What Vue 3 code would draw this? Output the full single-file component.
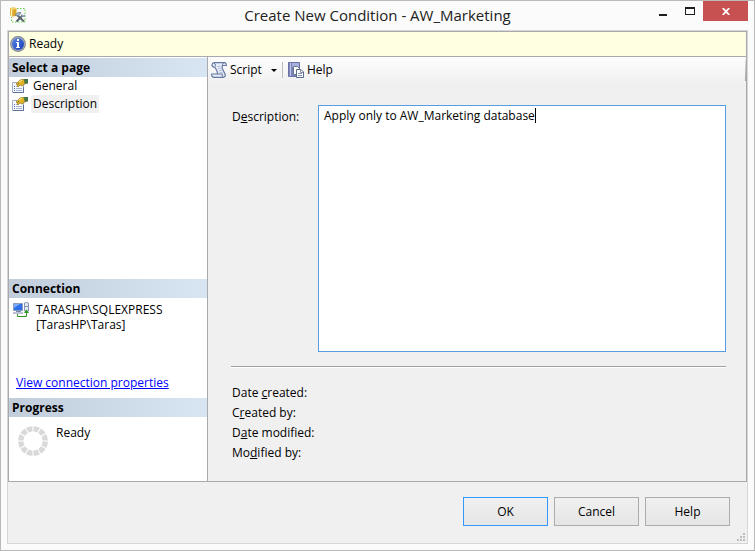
<script setup>
import { ref, onMounted } from 'vue'

const pages = ['General', 'Description']
const current = ref('Description')
const description = ref('Apply only to AW_Marketing database')
const details = [
  { before: 'Date ', key: 'c', after: 'reated:' },
  { before: 'C', key: 'r', after: 'eated by:' },
  { before: 'D', key: 'a', after: 'te modified:' },
  { before: 'Mo', key: 'd', after: 'ified by:' },
]
const segments = Array.from({ length: 12 }, (_, i) => i * 30 + 15)
const box = ref(null)
const caretLeft = ref(0)
const idle = ref(true)

// Steady caret after the last character until the user starts editing.
onMounted(() => {
  const style = getComputedStyle(box.value)
  const pen = document.createElement('canvas').getContext('2d')
  pen.font = `${style.fontSize} ${style.fontFamily}`
  caretLeft.value = Math.round(pen.measureText(description.value).width) + 6
})
</script>

<template>
  <div class="window">
    <header class="titlebar">
      <svg class="app-icon" width="16" height="16" viewBox="0 0 16 16" aria-hidden="true">
        <path d="M7 1.500H15V15H1.500V10" fill="none" stroke="#62cf42" stroke-width="1" stroke-dasharray="1.500 1.500" />
        <path d="M0 1.500Q3 -.5 6.500 1.500V8.500Q3 10.500 0 8.500Z" fill="#d9a72c" />
        <path d="M1.500 2V9" stroke="#fff2a8" stroke-width="1.500" />
        <ellipse cx="3.300" cy="1.600" rx="3" ry="1.100" fill="#f4d46b" />
        <path d="M6.500 14.500L12.500 8.500" stroke="#4e5b6b" stroke-width="1.800" />
        <path d="M7 8L14 14.500" stroke="#5c6470" stroke-width="1.800" />
        <path d="M5 8L8 5.500H11L8.500 9Z" fill="#aab9cc" stroke="#66778c" stroke-width=".7" />
        <path d="M11.500 6.500L13 8.500L15.500 7.500L14.500 10L11.500 10Z" fill="#8295ad" />
      </svg>
      <h1>Create New Condition - AW_Marketing</h1>
      <div class="window-buttons">
        <button class="minimize" type="button" aria-label="Minimize">
          <svg width="8" height="10"><path d="M0 9H8" stroke="#1e1e1e" stroke-width="2" /></svg>
        </button>
        <button class="maximize" type="button" aria-label="Maximize">
          <svg width="10" height="8"><path d="M0 1H10M.5 1V8M9.500 1V8M0 7.500H10" fill="none" stroke="#1e1e1e" /><path d="M0 1H10" stroke="#1e1e1e" stroke-width="2" /></svg>
        </button>
        <button class="close" type="button" aria-label="Close">
          <svg width="8" height="7" viewBox="0 0 8 7"><path d="M.7 0L7.300 7M7.300 0L.7 7" stroke="#fff" stroke-width="1.800" /></svg>
        </button>
      </div>
    </header>

    <div class="client">
      <div class="frame">
        <div class="status">
          <svg width="16" height="16" viewBox="0 0 16 16" aria-hidden="true">
            <defs>
              <linearGradient id="info" x1="0" y1="0" x2="1" y2="1">
                <stop offset="0" stop-color="#5c86ea" />
                <stop offset="1" stop-color="#123cae" />
              </linearGradient>
            </defs>
            <circle cx="8" cy="8" r="7.900" fill="#7d808d" />
            <circle cx="8" cy="8" r="7" fill="#a9adba" />
            <circle cx="8" cy="8" r="6" fill="url(#info)" />
            <path d="M7 3h2v2H7zM6 6h3v5h1v1H6v-1h1V7H6z" fill="#fff" />
          </svg>
          <span>Ready</span>
        </div>

        <div class="main">
          <aside class="sidebar">
            <h2>Select a page</h2>
            <nav class="pages">
              <button v-for="p in pages" :key="p" class="page" type="button" :class="{ active: p === current }" @click="current = p">
                <svg width="16" height="14" viewBox="0 0 16 14" aria-hidden="true">
                  <path d="M.5 3.500H11.500V13.500H.5Z" fill="#f8faff" stroke="#a3afc8" />
                  <path d="M1 13.500H11.500V8" fill="none" stroke="#5f7096" />
                  <path d="M2 7.500H3M2 9.500H3M2 11.500H3" stroke="#4b6fc2" />
                  <path d="M4 7.500H6M4 9.500H10M4 11.500H10" stroke="#a9b5ce" />
                  <path d="M4 5L8 1L11 0L13 2V5L10 7L8 6L6 8L5 7L7 4L5 6Z" fill="#e0b228" stroke="#8d701f" stroke-width=".6" />
                  <path d="M7 3L10 1" stroke="#ffed88" />
                  <path d="M11.500 0H16V4.500L13 5Z" fill="#477646" />
                </svg>
                <span>{{ p }}</span>
              </button>
            </nav>

            <h2>Connection</h2>
            <section class="connection">
              <div class="server">
                <svg width="16" height="16" viewBox="0 0 16 16" aria-hidden="true">
                  <path d="M.5 1.500H9.500V8.500H.5Z" fill="#2f6eea" stroke="#8b9cb9" />
                  <path d="M1 2H7L1 6Z" fill="#78acff" />
                  <path d="M3 9.500H8M0 11H10" stroke="#7885a3" />
                  <path d="M11.500 1Q13.500 0 15.500 1V9H11.500Z" fill="#e4e8f1" stroke="#8795b0" />
                  <path d="M12 4.500H15" stroke="#8795b0" />
                  <path d="M4.500 12V14.500H13.500V9" fill="none" stroke="#2f9820" />
                  <path d="M11 11L13.500 7.500L16 11Z" fill="#2f9820" />
                </svg>
                <p>TARASHP\SQLEXPRESS<br>[TarasHP\Taras]</p>
              </div>
              <a href="#connection">View connection properties</a>
            </section>

            <h2>Progress</h2>
            <section class="progress">
              <svg width="30" height="30" viewBox="-15 -15 30 30" aria-hidden="true">
                <path v-for="a in segments" :key="a" d="M-3.300 -14.500Q0 -15.300 3.300 -14.500L2 -9.300Q0 -9.800 -2 -9.300Z" fill="#d9d9d9" :transform="`rotate(${a})`" />
              </svg>
              <span>Ready</span>
            </section>
          </aside>

          <main class="content">
            <div class="toolbar">
              <button class="tool script" type="button">
                <svg width="16" height="16" viewBox="0 0 16 16" aria-hidden="true">
                  <path d="M3 .7H13.500Q15.500 .8 15.300 3.500H11.500Q10.500 5 12 8L14 12Q15 15 12 15.300H2.500Q.3 15 .7 12H6Q7 11 5.500 8L4 5.500Q1 5 1 3Q1 1 3 .7Z" fill="#e7ecf8" stroke="#65789f" stroke-width="1.200" />
                  <path d="M3 1Q5 1.500 4.300 4.500M12.500 1Q11 2 11.500 4M6 12H11.500Q10.500 14 12 15" fill="none" stroke="#65789f" />
                  <path d="M6 4.500H9.500M7 6.500H10M8 8.500H11M8.500 10.500H11.500" stroke="#b3c1dd" />
                </svg>
                <span>Script</span>
                <svg class="arrow" width="6" height="3" aria-hidden="true"><path d="M0 0H6L3 3Z" fill="#000" /></svg>
              </button>
              <span class="divider"></span>
              <button class="tool" type="button">
                <svg width="16" height="16" viewBox="0 0 16 16" aria-hidden="true">
                  <path d="M.5 .5H11.500V14.500H.5Z" fill="#7b83bd" stroke="#6a72a8" />
                  <path d="M2.500 1V14" stroke="#c3c7e6" />
                  <path d="M4 1H11V5H4Z" fill="#a8b0dc" />
                  <path d="M5.500 4.500H9.500L11.500 6.500V12.500H5.500Z" fill="#fff" stroke="#697994" />
                  <path d="M8.500 7.500H13L15.500 10V15.500H8.500Z" fill="#fff" stroke="#596b88" />
                  <path d="M12.500 7.500V10.500H15M10 11.500H14M10 13.500H14" fill="none" stroke="#8292ae" />
                </svg>
                <span>Help</span>
              </button>
            </div>

            <div class="form">
              <div class="field">
                <label for="description">D<u>e</u>scription:</label>
                <div class="editor">
                  <textarea id="description" ref="box" v-model="description" spellcheck="false" @focus="idle = false"></textarea>
                  <span v-if="idle" class="caret" :style="{ left: caretLeft + 'px' }"></span>
                </div>
              </div>
              <hr>
              <div class="details">
                <p v-for="d in details" :key="d.after">{{ d.before }}<u>{{ d.key }}</u>{{ d.after }}</p>
              </div>
            </div>
          </main>
        </div>
      </div>

      <footer class="actions">
        <button class="action default" type="button">OK</button>
        <button class="action" type="button">Cancel</button>
        <button class="action" type="button">Help</button>
        <svg class="grip" width="8" height="8" aria-hidden="true">
          <path d="M6 0h2v2H6zM3 3h2v2H3zM6 3h2v2H6zM0 6h2v2H0zM3 6h2v2H3zM6 6h2v2H6z" fill="#bdbdbd" />
        </svg>
      </footer>
    </div>
  </div>
</template>

<style>
body {
  margin: 0;
}
</style>

<style scoped>
* {
  box-sizing: border-box;
}

.window {
  display: flex;
  flex-direction: column;
  min-height: 100vh;
  padding: 0 6px 6px;
  border: 1px solid #b9b9b9;
  background: #fbfbfb;
  color: #000;
  font: 12px/16px "Segoe UI", "Open Sans", "Noto Sans", sans-serif;
}

button {
  padding: 0;
  border: 0;
  background: none;
  color: inherit;
  font: inherit;
}

svg {
  display: block;
  flex: none;
}

h1,
h2,
p {
  margin: 0;
}

.titlebar {
  display: grid;
  grid-template-columns: 1fr auto 1fr;
  height: 29px;
}

.app-icon {
  margin: 6px 0 0 3px;
}

h1 {
  color: #222;
  font-size: 15px;
  font-weight: 400;
  line-height: 29px;
}

.window-buttons {
  display: flex;
  justify-content: flex-end;
}

.window-buttons button {
  display: flex;
  align-items: center;
  justify-content: center;
  width: 27px;
  height: 20px;
}

.window-buttons .close {
  width: 45px;
  background: #c75050;
}

.client {
  display: flex;
  flex: 1;
  flex-direction: column;
  border: 1px solid #d6d6d6;
  background: #f0f0f0;
}

.frame {
  display: flex;
  flex: 1;
  flex-direction: column;
  border: 1px solid #a9a9ad;
}

.status {
  display: flex;
  align-items: center;
  gap: 3px;
  height: 25px;
  padding-left: 1px;
  border-bottom: 1px solid #a9a9ad;
  background: #ffffe1;
}

.main {
  display: flex;
  flex: 1;
}

.sidebar {
  display: flex;
  flex: none;
  flex-direction: column;
  width: 199px;
  padding-top: 1px;
  border-right: 1px solid #a9a9ad;
  background: #fff;
}

h2 {
  padding-left: 3px;
  background: linear-gradient(90deg, #c1cddb, #d8e5f3);
  font-size: 12px;
  font-weight: 700;
  line-height: 19px;
}

.pages {
  flex: 1;
}

.page {
  display: flex;
  align-items: center;
  gap: 3px;
  height: 18px;
  padding-left: 3px;
}

.page span {
  padding: 0 2px;
  line-height: 18px;
}

.page.active span {
  background: #f0f0f0;
}

.connection {
  display: flex;
  flex-direction: column;
  align-items: flex-start;
  justify-content: space-between;
  height: 100px;
  padding: 4px 7px 7px 4px;
}

.server {
  display: flex;
  gap: 7px;
  line-height: 15px;
}

.connection a {
  margin-left: 3px;
  color: #00f;
}

.progress {
  display: flex;
  gap: 8px;
  height: 64px;
  padding: 8px 9px;
}

.progress svg {
  margin-top: 1px;
}

.content {
  display: flex;
  flex: 1;
  flex-direction: column;
  min-width: 0;
}

.toolbar {
  display: flex;
  align-items: center;
  height: 26px;
  padding-left: 3px;
  background:
    linear-gradient(#e4e4e4, #a0a0a0) right 3px / 1px 21px no-repeat,
    linear-gradient(#fdfdfd, #f0f0f0);
}

.tool {
  display: flex;
  align-items: center;
  gap: 3px;
}

.arrow {
  margin-left: 6px;
}

.divider {
  width: 1px;
  height: 16px;
  margin: 0 5px;
  background: #bdbdbd;
}

.form {
  display: flex;
  flex: 1;
  flex-direction: column;
  padding: 22px 20px 18px 23px;
}

.field {
  display: flex;
  flex: 1;
}

.field label {
  width: 87px;
  padding: 4px 0 0 1px;
}

.editor {
  position: relative;
  display: flex;
  flex: 1;
  min-width: 0;
}

textarea {
  flex: 1;
  min-width: 0;
  padding: 2px 5px;
  border: 1px solid #569de5;
  outline: 0;
  background: #fff;
  color: #000;
  font: inherit;
  resize: none;
}

.caret {
  position: absolute;
  top: 3px;
  width: 1px;
  height: 15px;
  background: #000;
  pointer-events: none;
}

hr {
  width: 100%;
  height: 2px;
  margin: 14px 0 15px;
  border: 0;
  border-top: 1px solid #a0a0a0;
  border-bottom: 1px solid #fff;
}

.details {
  padding-left: 1px;
  line-height: 20px;
}

.actions {
  position: relative;
  display: flex;
  justify-content: flex-end;
  gap: 6px;
  padding: 15px 17px 17px;
}

.action {
  width: 85px;
  height: 29px;
  border: 1px solid #acacac;
  background: linear-gradient(#f0f0f0, #e5e5e5);
}

.action.default {
  border-color: #3399ff;
}

.grip {
  position: absolute;
  right: 2px;
  bottom: 2px;
}
</style>
